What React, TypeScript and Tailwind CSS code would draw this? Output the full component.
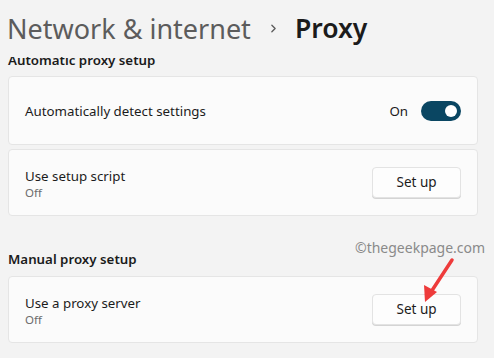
import { ChevronRight } from 'lucide-react'

const font = { fontFamily: '"Noto Sans", "Open Sans", sans-serif' }

function SetupButton() {
  return (
    <button className="h-[31px] w-[89px] rounded-[4px] border border-[#e3e3e3] bg-[#fdfdfd] text-[13.5px] text-[#1b1b1b] shadow-[0_1px_0_#d4d4d4]">
      Set up
    </button>
  )
}

function Row({ title, sub }: { title: string; sub: string }) {
  return (
    <div className="flex h-[67px] items-center justify-between rounded-[4px] border border-[#e5e5e5] bg-[#fbfbfb] pl-[16px] pr-[16px]">
      <div className="flex flex-col pt-[3px]">
        <span className="text-[13.3px] leading-[18px] text-[#1b1b1b]">{title}</span>
        <span className="text-[11.5px] leading-[16px] text-[#6b6b6b]">{sub}</span>
      </div>
      <SetupButton />
    </div>
  )
}

export default function App() {
  return (
    <div className="relative h-[358px] w-[494px] overflow-hidden bg-[#f3f3f3]" style={font}>
      <div className="flex h-[57px] items-center pl-[7px]">
        <span className="text-[27px] leading-none text-[#5c5c5c]">Network &amp; internet</span>
        <ChevronRight className="ml-[16px] mr-[15px] h-[13px] w-[13px] text-[#5c5c5c]" strokeWidth={2.5} />
        <span className="text-[26.5px] font-semibold leading-none text-[#1b1b1b]">Proxy</span>
      </div>

      <div className="h-[301px] overflow-hidden pl-[8px] pr-[16px]">
        <div className="-mt-[7px] text-[13.3px] font-semibold leading-[20px] text-[#1b1b1b]">
          Automatic proxy setup
        </div>
        <div className="mt-[6px] flex h-[69px] items-center justify-between rounded-[4px] border border-[#e5e5e5] bg-[#fbfbfb] pl-[16px] pr-[16px]">
          <span className="mt-[2px] text-[13.3px] text-[#1b1b1b]">Automatically detect settings</span>
          <div className="flex items-center gap-[13px]">
            <span className="mt-[2px] text-[13.3px] text-[#1b1b1b]">On</span>
            <div className="flex h-[20px] w-[40px] items-center justify-end rounded-full bg-[#0a4662] pr-[4px]">
              <div className="h-[12px] w-[12px] rounded-full bg-white" />
            </div>
          </div>
        </div>
        <div className="mt-[4px]">
          <Row title="Use setup script" sub="Off" />
        </div>

        <div className="mt-[33px] text-[13.3px] font-semibold leading-[20px] text-[#1b1b1b]">Manual proxy setup</div>
        <div className="mt-[7px]">
          <Row title="Use a proxy server" sub="Off" />
        </div>
      </div>

      <span className="absolute left-[355px] top-[238px] text-[14px] leading-[20px] text-[#8a8a8a]">
        ©thegeekpage.com
      </span>
      <svg className="absolute left-0 top-0" width="494" height="358" viewBox="0 0 494 358">
        <line x1="452" y1="260" x2="431" y2="292" stroke="#ee3b3b" strokeWidth="3.5" strokeLinecap="round" />
        <polygon points="425,302 424,285 437,292" fill="#ee3b3b" />
      </svg>
    </div>
  )
}
